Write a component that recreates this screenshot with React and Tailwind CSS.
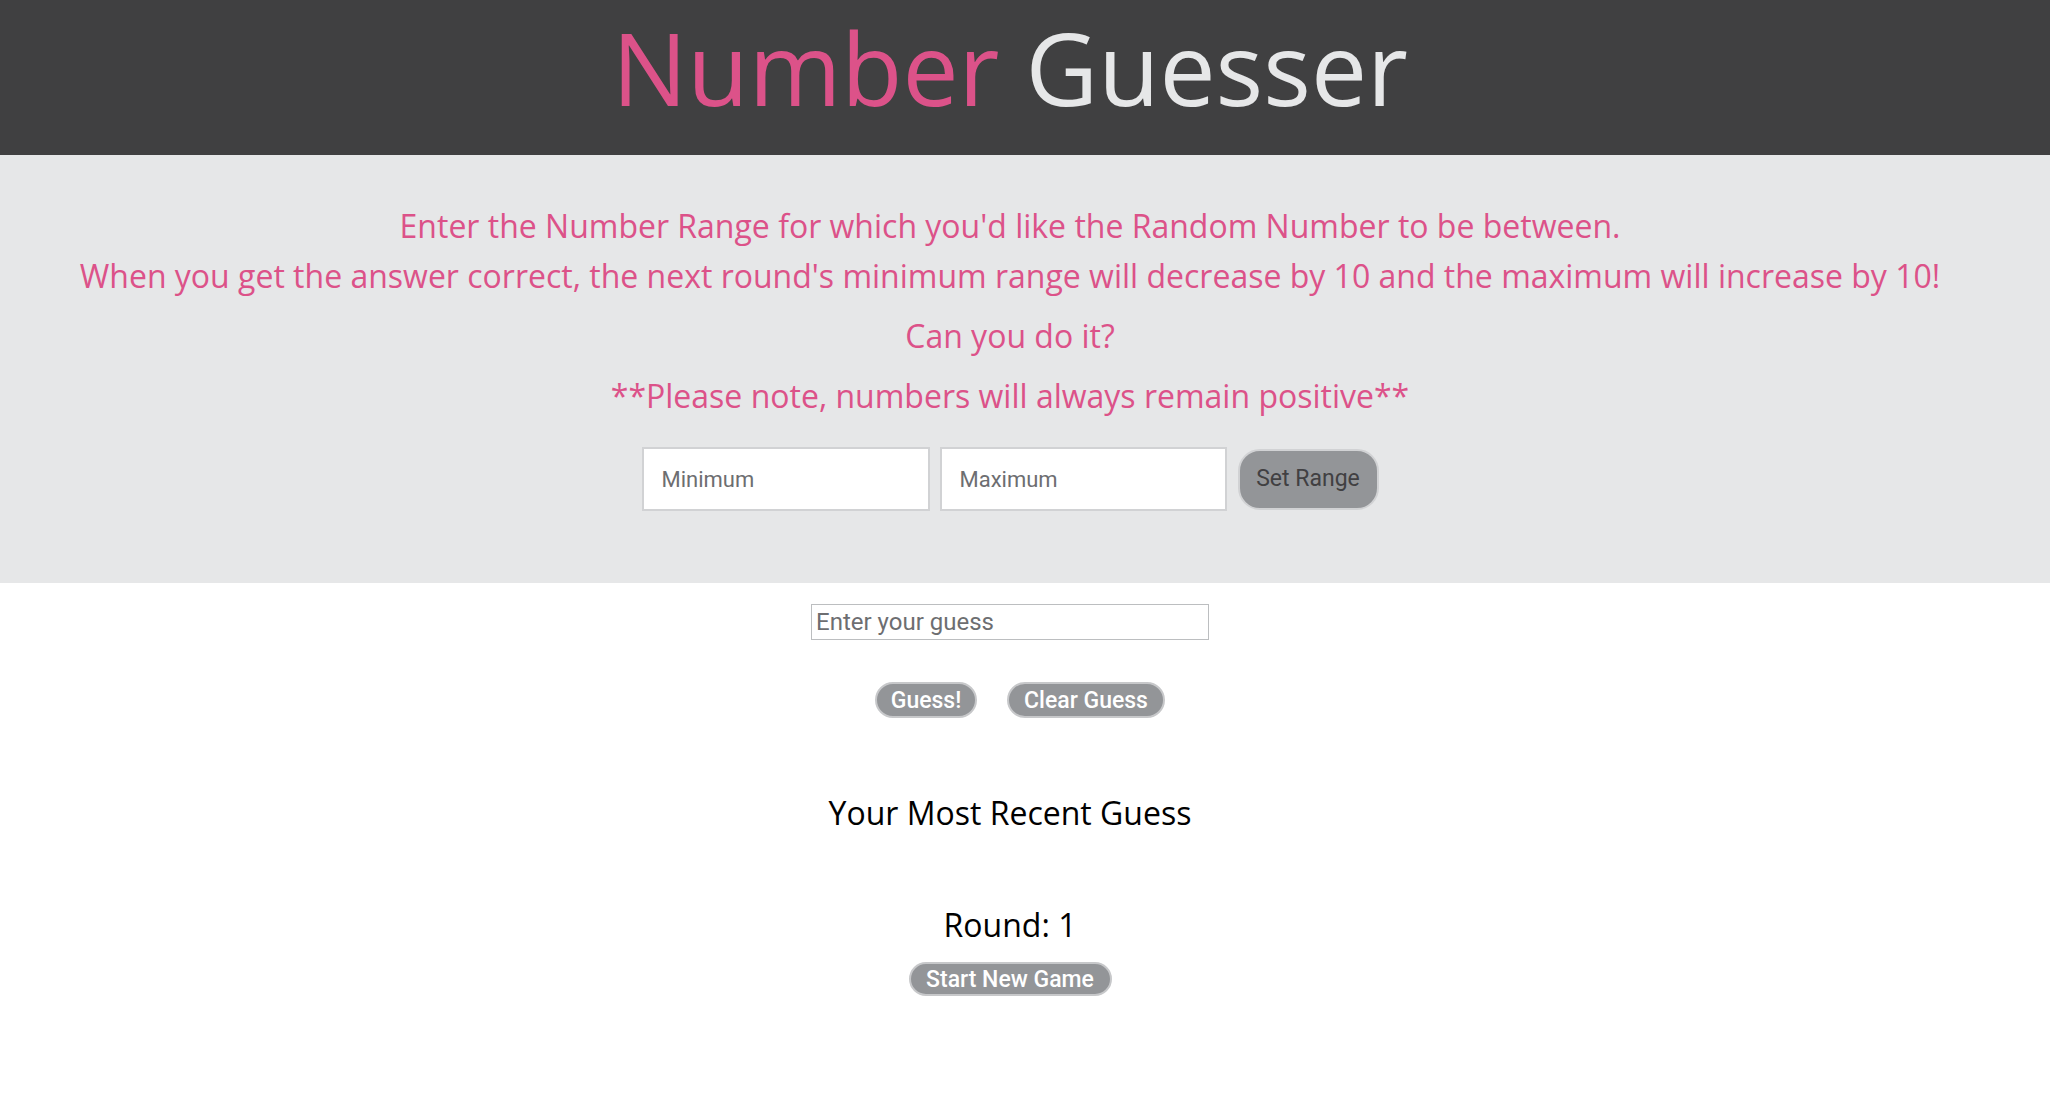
import React, { useState } from "react";

const sans = "font-['Open_Sans',sans-serif]";
const ui = "font-['Roboto','Liberation_Sans',sans-serif]";

const App = () => {
    const [min, setMin] = useState("");
    const [max, setMax] = useState("");
    const [guess, setGuess] = useState("");
    const [round] = useState(1);

    return (
        <div className={`min-h-screen bg-white ${sans}`}>
            {/* Header */}
            <header className="h-[155px] bg-[#404041] flex justify-center pr-[30px] pt-[17px]">
                <h1 className="text-[100px] leading-none font-normal whitespace-nowrap">
                    <span className="text-[#dc5289]">Number</span>{" "}
                    <span className="text-[#e6e7e8]">Guesser</span>
                </h1>
            </header>

            {/* Range section */}
            <section className="bg-[#e6e7e8] pt-[46px] pb-[72px] pr-[30px] text-center text-[#dc5289] text-[32px] leading-[50px]">
                <p>
                    Enter the Number Range for which you'd like the Random Number to be between.
                    <br />
                    When you get the answer correct, the next round's minimum range will decrease by 10 and the maximum will increase by 10!
                </p>
                <p className="mt-[10px]">Can you do it?</p>
                <p className="mt-[10px]">**Please note, numbers will always remain positive**</p>

                <div className={`mt-[26px] flex justify-center items-center ${ui}`}>
                    <input
                        type="number"
                        placeholder="Minimum"
                        value={min}
                        onChange={(e) => setMin(e.target.value)}
                        className="w-[288px] h-[64px] bg-white border-2 border-[#d1d2d4] px-[18px] text-[22px] text-[#414042] placeholder:text-[#6d6e71] outline-none"
                    />
                    <input
                        type="number"
                        placeholder="Maximum"
                        value={max}
                        onChange={(e) => setMax(e.target.value)}
                        className="ml-[10px] w-[287px] h-[64px] bg-white border-2 border-[#d1d2d4] px-[18px] text-[22px] text-[#414042] placeholder:text-[#6d6e71] outline-none"
                    />
                    <button className="ml-[11px] w-[141px] h-[61px] rounded-[22px] bg-[#939598] border-2 border-[#d1d2d4] text-[23px] text-[#414042]">
                        Set Range
                    </button>
                </div>
            </section>

            {/* Guess section */}
            <section className={`flex flex-col items-center pr-[30px] pt-[21px] ${ui}`}>
                <input
                    type="number"
                    placeholder="Enter your guess"
                    value={guess}
                    onChange={(e) => setGuess(e.target.value)}
                    className="w-[398px] h-[36px] border border-[#bcbec0] px-[4px] text-[24px] text-[#414042] placeholder:text-[#6d6e71] outline-none"
                />
                <div className="mt-[42px] flex gap-[30px] pl-[20px]">
                    <button className="w-[102px] h-[36px] rounded-full bg-[#939598] border-2 border-[#c7c8ca] text-white text-[23px] font-medium leading-none">
                        Guess!
                    </button>
                    <button className="w-[158px] h-[36px] rounded-full bg-[#939598] border-2 border-[#c7c8ca] text-white text-[23px] font-medium leading-none">
                        Clear Guess
                    </button>
                </div>
            </section>

            <section className="flex flex-col items-center pr-[30px] text-black">
                <h2 className="mt-[73px] text-[32px] leading-[44px] font-normal">Your Most Recent Guess</h2>
                <h3 className="mt-[68px] text-[32px] leading-[44px] font-normal">Round: {round}</h3>
                <button className={`mt-[15px] w-[203px] h-[34px] rounded-full bg-[#939598] border-2 border-[#c7c8ca] text-white text-[23px] font-medium leading-none ${ui}`}>
                    Start New Game
                </button>
            </section>
        </div>
    );
};

export default App;
